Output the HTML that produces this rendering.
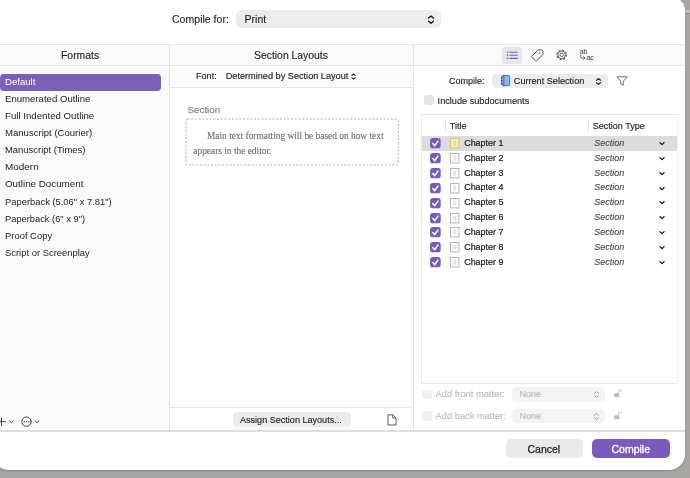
<!DOCTYPE html><html><head><meta charset="utf-8"><title>Compile</title><style>
*{box-sizing:border-box;margin:0;padding:0}
html,body{width:690px;height:478px;overflow:hidden}
body{position:relative;background:#a7a6a2;font-family:"Liberation Sans",sans-serif;color:#1d1d1d;font-size:9px;-webkit-text-stroke:.13px currentColor;-webkit-font-smoothing:antialiased}
.abs,.t,.l{position:absolute}
.t{white-space:nowrap;line-height:12px;height:12px}
.win{position:absolute;left:-5px;top:-2px;width:690px;height:472px;background:#fff;border-radius:12px 12px 16px 13px;box-shadow:0 1px 2.5px rgba(0,0,0,.16)}
.clip{position:absolute;left:-5px;top:-2px;width:690px;height:472px;border-radius:12px 12px 16px 13px;overflow:hidden}
.in{position:absolute;left:5px;top:2px;width:690px;height:478px;will-change:transform}
.hl{position:absolute;height:1px;background:#e4e4e4}
.vl{position:absolute;width:1px;background:#e4e4e4}
.cb{position:absolute;width:11px;height:11px;border-radius:3px;background:#7a58bf}
.cb svg{position:absolute;left:0;top:0}
.doc{position:absolute;width:9.5px;height:10.6px;border:1px solid #b4b4b4;background:#fff}
.doc i{position:absolute;left:2px;right:2px;top:2px;bottom:2px;background:#e9e9e9}
.sec{font-style:italic;color:#4a4a4a}
</style></head><body>
<div class="abs" style="left:670px;top:9.5px;width:20px;height:3.5px;background:#c3c0b8"></div><div class="abs" style="left:670px;top:13px;width:20px;height:1px;background:#8e8e8a"></div><div class="win"></div><div class="clip"><div class="in">
<div class="abs" style="left:0;top:45px;width:685px;height:21px;background:#fafafa"></div>
<div class="abs" style="left:0;top:66px;width:169px;height:365px;background:#fafafa"></div>
<div class="abs" style="left:170px;top:66px;width:243px;height:21px;background:#fbfbfb"></div>
<div class="hl" style="left:0;top:44px;width:685px"></div>
<div class="hl" style="left:0;top:65px;width:685px"></div>
<div class="vl" style="left:169px;top:45px;height:386px"></div>
<div class="vl" style="left:413px;top:45px;height:386px"></div>
<div class="hl" style="left:170px;top:87px;width:243px"></div>
<div class="hl" style="left:170px;top:407px;width:243px"></div>
<div class="abs" style="left:0;top:430px;width:685px;height:2px;background:#dcdce3"></div>
<div class="t" style="left:172px;top:13px;font-size:10.55px">Compile for:</div>
<div class="abs" style="left:235.6px;top:10.1px;width:205.6px;height:18px;border-radius:5px;background:#ececec"></div>
<div class="t" style="left:244.6px;top:13px;font-size:10.5px">Print</div>
<svg class="abs" style="left:426px;top:13px" width="10" height="13" viewBox="0 0 10 13"><path d="M2.5 5 L5 2.9 L7.5 5 M2.5 8.2 L5 10.3 L7.5 8.2" fill="none" stroke="#111" stroke-width="1.3" stroke-linecap="round" stroke-linejoin="round"/></svg>
<div class="t" style="left:61px;top:49.5px;font-size:10.4px">Formats</div>
<div class="t" style="left:254px;top:49.5px;font-size:10.4px">Section Layouts</div>
<div class="abs" style="left:-.5px;top:74px;width:161.5px;height:16.6px;border-radius:4px;background:#7b60ba"></div>
<div class="t" style="left:5px;top:76px;font-size:9.5px;color:#fff;-webkit-text-stroke:0;transform:scaleX(1.009);transform-origin:0 50%">Default</div>
<div class="t" style="left:5px;top:93px;font-size:9.5px;color:#222;-webkit-text-stroke:0;transform:scaleX(1.01);transform-origin:0 50%">Enumerated Outline</div>
<div class="t" style="left:5px;top:110px;font-size:9.5px;color:#222;-webkit-text-stroke:0;transform:scaleX(1.018);transform-origin:0 50%">Full Indented Outline</div>
<div class="t" style="left:5px;top:127px;font-size:9.5px;color:#222;-webkit-text-stroke:0;transform:scaleX(1.006);transform-origin:0 50%">Manuscript (Courier)</div>
<div class="t" style="left:5px;top:144px;font-size:9.5px;color:#222;-webkit-text-stroke:0;transform:scaleX(0.993);transform-origin:0 50%">Manuscript (Times)</div>
<div class="t" style="left:5px;top:161px;font-size:9.5px;color:#222;-webkit-text-stroke:0;transform:scaleX(1.046);transform-origin:0 50%">Modern</div>
<div class="t" style="left:5px;top:178px;font-size:9.5px;color:#222;-webkit-text-stroke:0;transform:scaleX(1.031);transform-origin:0 50%">Outline Document</div>
<div class="t" style="left:5px;top:196px;font-size:9.5px;color:#222;-webkit-text-stroke:0;transform:scaleX(0.987);transform-origin:0 50%">Paperback (5.06&quot; x 7.81&quot;)</div>
<div class="t" style="left:5px;top:213px;font-size:9.5px;color:#222;-webkit-text-stroke:0;transform:scaleX(0.98);transform-origin:0 50%">Paperback (6&quot; x 9&quot;)</div>
<div class="t" style="left:5px;top:230px;font-size:9.5px;color:#222;-webkit-text-stroke:0;transform:scaleX(0.991);transform-origin:0 50%">Proof Copy</div>
<div class="t" style="left:5px;top:247px;font-size:9.5px;color:#222;-webkit-text-stroke:0;transform:scaleX(0.991);transform-origin:0 50%">Script or Screenplay</div>
<svg class="abs" style="left:0;top:414px" width="44" height="16" viewBox="0 0 44 16"><g fill="none" stroke="#444" stroke-width="1" stroke-linecap="round" stroke-linejoin="round"><path d="M1.5 4 V11.6 M-2 7.7 H5.6"/><path d="M9.6 7 L11.4 8.7 L13.2 7"/><circle cx="26.5" cy="7.7" r="4.7"/><path d="M35.2 7 L37 8.7 L38.8 7"/></g><g fill="#444"><circle cx="24.3" cy="7.7" r=".7"/><circle cx="26.5" cy="7.7" r=".7"/><circle cx="28.7" cy="7.7" r=".7"/></g></svg>
<div class="t" style="left:196px;top:69.9px;font-size:9.1px">Font:</div>
<div class="t" style="left:225.7px;top:69.9px;font-size:9.17px">Determined by Section Layout</div>
<svg class="abs" style="left:350px;top:70.7px" width="7" height="11" viewBox="0 0 7 11"><path d="M1.9 4.4 L3.5 2.9 L5.1 4.4 M1.9 6.6 L3.5 8.1 L5.1 6.6" fill="none" stroke="#222" stroke-width="1.1" stroke-linecap="round" stroke-linejoin="round"/></svg>
<div class="t" style="left:187.5px;top:104px;font-size:9.8px;color:#7c7c7c">Section</div>
<svg class="abs" style="left:184px;top:117px" width="216" height="50" viewBox="0 0 216 50"><rect x="2" y="2" width="212.3" height="46" rx="1.5" fill="none" stroke="#adadad" stroke-width="1" stroke-dasharray="2 1.7"/></svg>
<div class="t" style="left:207px;top:129.5px;font-family:'Liberation Serif',serif;font-size:9.4px;color:#707070">Main text formatting will be based on how text</div>
<div class="t" style="left:193.3px;top:145px;font-family:'Liberation Serif',serif;font-size:9.4px;color:#707070">appears in the editor.</div>
<div class="abs" style="left:232.5px;top:411.5px;width:118px;height:15.5px;border-radius:4px;background:#ececec"></div>
<div class="t" style="left:240px;top:413.5px;font-size:9.07px">Assign Section Layouts...</div>
<svg class="abs" style="left:386px;top:413px" width="12" height="14" viewBox="0 0 12 14"><path d="M2 1.8 H6.8 L10 5 V12 H2 Z M6.8 1.8 V5 H10" fill="#fff" stroke="#4a4a4a" stroke-width=".9" stroke-linejoin="round"/></svg>
<div class="abs" style="left:502px;top:46.5px;width:20px;height:17px;border-radius:3px;background:#e6e6e6"></div>
<svg class="abs" style="left:504px;top:48px" width="16" height="14" viewBox="0 0 16 14"><g stroke="#7a58bf" stroke-width="1.1" stroke-linecap="round"><path d="M6 4.2 H13.2 M6 7.3 H13.2 M6 10.4 H13.2"/></g><g fill="#7a58bf"><circle cx="3.6" cy="4.2" r=".8"/><circle cx="3.6" cy="7.3" r=".8"/><circle cx="3.6" cy="10.4" r=".8"/></g></svg>
<svg class="abs" style="left:529px;top:47px" width="16" height="16" viewBox="0 0 16 16"><path d="M2.6 9.2 L8.6 3.6 Q9.4 2.9 10.5 2.9 L12.3 2.9 Q14 2.9 14 4.6 L14 6.6 Q14 7.6 13.3 8.3 L7.6 13.8 Q7 14.3 6.4 13.7 L2.6 10.2 Q2.1 9.7 2.6 9.2 Z" fill="none" stroke="#4d4d4d" stroke-width="1" stroke-linejoin="round"/><circle cx="10.8" cy="5.9" r=".75" fill="#4d4d4d"/></svg>
<svg class="abs" style="left:554px;top:47.1px" width="16" height="16" viewBox="0 0 16 16"><circle cx="7.7" cy="7.8" r="3.8" fill="none" stroke="#555" stroke-width=".95"/><circle cx="7.7" cy="7.8" r="4.8" fill="none" stroke="#555" stroke-width="1.1" stroke-dasharray="1.9 1.87"/><circle cx="7.7" cy="7.8" r="1.7" fill="none" stroke="#555" stroke-width=".85"/></svg>
<div class="t" style="left:579.8px;top:45.9px;font-size:6.8px;color:#555;letter-spacing:0">ab</div>
<div class="t" style="left:586.6px;top:51.9px;font-size:6.8px;color:#555;letter-spacing:0">ac</div>
<svg class="abs" style="left:578px;top:53px" width="10" height="8" viewBox="0 0 10 8"><path d="M2.7 2.4 V4 Q2.7 5 3.7 5 H7 M5.6 3.7 L7 5 L5.6 6.3" fill="none" stroke="#555" stroke-width=".9" stroke-linecap="round" stroke-linejoin="round"/></svg>
<div class="t" style="left:449px;top:74.8px;font-size:9px">Compile:</div>
<div class="abs" style="left:492px;top:73.5px;width:115.5px;height:14.5px;border-radius:4.5px;background:#ececec"></div>
<svg class="abs" style="left:500px;top:74px" width="11" height="13" viewBox="0 0 11 13"><rect x="1.8" y="1.6" width="7.8" height="10" rx="1.2" fill="#86bdf0" stroke="#3a6a9f" stroke-width=".9"/><path d="M3.9 1.6 V11.6" stroke="#2c5f93" stroke-width=".9"/><path d="M.9 3.6 H2.6 M.9 6.6 H2.6 M.9 9.6 H2.6" stroke="#333" stroke-width=".8"/></svg>
<div class="t" style="left:513.8px;top:74.8px;font-size:9.14px">Current Selection</div>
<svg class="abs" style="left:595.2px;top:75.6px" width="7" height="11" viewBox="0 0 7 11"><path d="M1.5 4.2 L3.5 2.6 L5.5 4.2 M1.5 6.8 L3.5 8.4 L5.5 6.8" fill="none" stroke="#111" stroke-width="1.15" stroke-linecap="round" stroke-linejoin="round"/></svg>
<svg class="abs" style="left:615px;top:75px" width="14" height="12" viewBox="0 0 14 12"><path d="M1.8 1.8 H12.2 L8.3 6.2 V10.2 L5.7 8.8 V6.2 Z" fill="none" stroke="#686868" stroke-width=".95" stroke-linejoin="round"/></svg>
<div class="abs" style="left:424.3px;top:95.2px;width:10px;height:9.7px;border-radius:2.7px;background:#e5e5e5"></div>
<div class="t" style="left:437.6px;top:95px;font-size:9.17px">Include subdocuments</div>
<div class="abs" style="left:421px;top:114px;width:257px;height:270px;border:1px solid #e6e6e6;border-left-color:#eaeaea;border-right-color:#efefef;background:#fff"></div>
<div class="vl" style="left:445px;top:119.5px;height:12.5px;background:#e2e2e2"></div>
<div class="vl" style="left:588px;top:119.5px;height:12.5px;background:#e2e2e2"></div>
<div class="t" style="left:449.8px;top:120px;font-size:9.1px">Title</div>
<div class="t" style="left:592.7px;top:120px;font-size:9.06px">Section Type</div>
<div class="abs" style="left:422px;top:136.1px;width:255px;height:14.6px;background:#dcdcdc"></div>
<svg class="abs" style="left:430px;top:138.3px" width="11" height="11" viewBox="0 0 11 11"><rect x=".1" y=".05" width="10.6" height="10.3" rx="2.7" fill="#7a58bf"/><path d="M2.8 5.5 L4.6 7.7 L8 3.1" fill="none" stroke="#fff" stroke-width="1.5" stroke-linecap="round" stroke-linejoin="round"/></svg>
<svg class="abs" style="left:450px;top:138.3px" width="10" height="11" viewBox="0 0 10 11"><rect x=".5" y=".5" width="8.4" height="9.4" fill="#f8f0b2" stroke="#d6c670" stroke-width="1"/><rect x="3.2" y="2.7" width="3.2" height="5" fill="#ecdc8c"/></svg>
<div class="t" style="left:464.2px;top:137px;font-size:8.95px;-webkit-text-stroke:.22px currentColor">Chapter 1</div>
<div class="t sec" style="left:594.2px;top:137px;font-size:9px">Section</div>
<svg class="abs" style="left:658.3px;top:140.0px" width="8" height="7" viewBox="0 0 8 7"><path d="M1.9 2.6 L4 4.6 L6.1 2.6" fill="none" stroke="#111" stroke-width="1.3" stroke-linecap="round" stroke-linejoin="round"/></svg>
<svg class="abs" style="left:430px;top:153.1px" width="11" height="11" viewBox="0 0 11 11"><rect x=".1" y=".05" width="10.6" height="10.3" rx="2.7" fill="#7a58bf"/><path d="M2.8 5.5 L4.6 7.7 L8 3.1" fill="none" stroke="#fff" stroke-width="1.5" stroke-linecap="round" stroke-linejoin="round"/></svg>
<svg class="abs" style="left:450px;top:153.1px" width="10" height="11" viewBox="0 0 10 11"><rect x=".5" y=".5" width="8.4" height="9.4" fill="#fff" stroke="#b4b4b4" stroke-width="1"/><rect x="3.2" y="2.7" width="3.2" height="5" fill="#e4e4e4"/></svg>
<div class="t" style="left:464.2px;top:152px;font-size:8.95px;-webkit-text-stroke:.22px currentColor">Chapter 2</div>
<div class="t sec" style="left:594.2px;top:152px;font-size:9px">Section</div>
<svg class="abs" style="left:658.3px;top:154.8px" width="8" height="7" viewBox="0 0 8 7"><path d="M1.9 2.6 L4 4.6 L6.1 2.6" fill="none" stroke="#111" stroke-width="1.3" stroke-linecap="round" stroke-linejoin="round"/></svg>
<svg class="abs" style="left:430px;top:168.0px" width="11" height="11" viewBox="0 0 11 11"><rect x=".1" y=".05" width="10.6" height="10.3" rx="2.7" fill="#7a58bf"/><path d="M2.8 5.5 L4.6 7.7 L8 3.1" fill="none" stroke="#fff" stroke-width="1.5" stroke-linecap="round" stroke-linejoin="round"/></svg>
<svg class="abs" style="left:450px;top:168.0px" width="10" height="11" viewBox="0 0 10 11"><rect x=".5" y=".5" width="8.4" height="9.4" fill="#fff" stroke="#b4b4b4" stroke-width="1"/><rect x="3.2" y="2.7" width="3.2" height="5" fill="#e4e4e4"/></svg>
<div class="t" style="left:464.2px;top:167px;font-size:8.95px;-webkit-text-stroke:.22px currentColor">Chapter 3</div>
<div class="t sec" style="left:594.2px;top:167px;font-size:9px">Section</div>
<svg class="abs" style="left:658.3px;top:169.7px" width="8" height="7" viewBox="0 0 8 7"><path d="M1.9 2.6 L4 4.6 L6.1 2.6" fill="none" stroke="#111" stroke-width="1.3" stroke-linecap="round" stroke-linejoin="round"/></svg>
<svg class="abs" style="left:430px;top:182.8px" width="11" height="11" viewBox="0 0 11 11"><rect x=".1" y=".05" width="10.6" height="10.3" rx="2.7" fill="#7a58bf"/><path d="M2.8 5.5 L4.6 7.7 L8 3.1" fill="none" stroke="#fff" stroke-width="1.5" stroke-linecap="round" stroke-linejoin="round"/></svg>
<svg class="abs" style="left:450px;top:182.8px" width="10" height="11" viewBox="0 0 10 11"><rect x=".5" y=".5" width="8.4" height="9.4" fill="#fff" stroke="#b4b4b4" stroke-width="1"/><rect x="3.2" y="2.7" width="3.2" height="5" fill="#e4e4e4"/></svg>
<div class="t" style="left:464.2px;top:181px;font-size:8.95px;-webkit-text-stroke:.22px currentColor">Chapter 4</div>
<div class="t sec" style="left:594.2px;top:181px;font-size:9px">Section</div>
<svg class="abs" style="left:658.3px;top:184.5px" width="8" height="7" viewBox="0 0 8 7"><path d="M1.9 2.6 L4 4.6 L6.1 2.6" fill="none" stroke="#111" stroke-width="1.3" stroke-linecap="round" stroke-linejoin="round"/></svg>
<svg class="abs" style="left:430px;top:197.7px" width="11" height="11" viewBox="0 0 11 11"><rect x=".1" y=".05" width="10.6" height="10.3" rx="2.7" fill="#7a58bf"/><path d="M2.8 5.5 L4.6 7.7 L8 3.1" fill="none" stroke="#fff" stroke-width="1.5" stroke-linecap="round" stroke-linejoin="round"/></svg>
<svg class="abs" style="left:450px;top:197.7px" width="10" height="11" viewBox="0 0 10 11"><rect x=".5" y=".5" width="8.4" height="9.4" fill="#fff" stroke="#b4b4b4" stroke-width="1"/><rect x="3.2" y="2.7" width="3.2" height="5" fill="#e4e4e4"/></svg>
<div class="t" style="left:464.2px;top:196px;font-size:8.95px;-webkit-text-stroke:.22px currentColor">Chapter 5</div>
<div class="t sec" style="left:594.2px;top:196px;font-size:9px">Section</div>
<svg class="abs" style="left:658.3px;top:199.4px" width="8" height="7" viewBox="0 0 8 7"><path d="M1.9 2.6 L4 4.6 L6.1 2.6" fill="none" stroke="#111" stroke-width="1.3" stroke-linecap="round" stroke-linejoin="round"/></svg>
<svg class="abs" style="left:430px;top:212.5px" width="11" height="11" viewBox="0 0 11 11"><rect x=".1" y=".05" width="10.6" height="10.3" rx="2.7" fill="#7a58bf"/><path d="M2.8 5.5 L4.6 7.7 L8 3.1" fill="none" stroke="#fff" stroke-width="1.5" stroke-linecap="round" stroke-linejoin="round"/></svg>
<svg class="abs" style="left:450px;top:212.5px" width="10" height="11" viewBox="0 0 10 11"><rect x=".5" y=".5" width="8.4" height="9.4" fill="#fff" stroke="#b4b4b4" stroke-width="1"/><rect x="3.2" y="2.7" width="3.2" height="5" fill="#e4e4e4"/></svg>
<div class="t" style="left:464.2px;top:211px;font-size:8.95px;-webkit-text-stroke:.22px currentColor">Chapter 6</div>
<div class="t sec" style="left:594.2px;top:211px;font-size:9px">Section</div>
<svg class="abs" style="left:658.3px;top:214.2px" width="8" height="7" viewBox="0 0 8 7"><path d="M1.9 2.6 L4 4.6 L6.1 2.6" fill="none" stroke="#111" stroke-width="1.3" stroke-linecap="round" stroke-linejoin="round"/></svg>
<svg class="abs" style="left:430px;top:227.3px" width="11" height="11" viewBox="0 0 11 11"><rect x=".1" y=".05" width="10.6" height="10.3" rx="2.7" fill="#7a58bf"/><path d="M2.8 5.5 L4.6 7.7 L8 3.1" fill="none" stroke="#fff" stroke-width="1.5" stroke-linecap="round" stroke-linejoin="round"/></svg>
<svg class="abs" style="left:450px;top:227.3px" width="10" height="11" viewBox="0 0 10 11"><rect x=".5" y=".5" width="8.4" height="9.4" fill="#fff" stroke="#b4b4b4" stroke-width="1"/><rect x="3.2" y="2.7" width="3.2" height="5" fill="#e4e4e4"/></svg>
<div class="t" style="left:464.2px;top:226px;font-size:8.95px;-webkit-text-stroke:.22px currentColor">Chapter 7</div>
<div class="t sec" style="left:594.2px;top:226px;font-size:9px">Section</div>
<svg class="abs" style="left:658.3px;top:229.0px" width="8" height="7" viewBox="0 0 8 7"><path d="M1.9 2.6 L4 4.6 L6.1 2.6" fill="none" stroke="#111" stroke-width="1.3" stroke-linecap="round" stroke-linejoin="round"/></svg>
<svg class="abs" style="left:430px;top:242.2px" width="11" height="11" viewBox="0 0 11 11"><rect x=".1" y=".05" width="10.6" height="10.3" rx="2.7" fill="#7a58bf"/><path d="M2.8 5.5 L4.6 7.7 L8 3.1" fill="none" stroke="#fff" stroke-width="1.5" stroke-linecap="round" stroke-linejoin="round"/></svg>
<svg class="abs" style="left:450px;top:242.2px" width="10" height="11" viewBox="0 0 10 11"><rect x=".5" y=".5" width="8.4" height="9.4" fill="#fff" stroke="#b4b4b4" stroke-width="1"/><rect x="3.2" y="2.7" width="3.2" height="5" fill="#e4e4e4"/></svg>
<div class="t" style="left:464.2px;top:241px;font-size:8.95px;-webkit-text-stroke:.22px currentColor">Chapter 8</div>
<div class="t sec" style="left:594.2px;top:241px;font-size:9px">Section</div>
<svg class="abs" style="left:658.3px;top:243.9px" width="8" height="7" viewBox="0 0 8 7"><path d="M1.9 2.6 L4 4.6 L6.1 2.6" fill="none" stroke="#111" stroke-width="1.3" stroke-linecap="round" stroke-linejoin="round"/></svg>
<svg class="abs" style="left:430px;top:257.0px" width="11" height="11" viewBox="0 0 11 11"><rect x=".1" y=".05" width="10.6" height="10.3" rx="2.7" fill="#7a58bf"/><path d="M2.8 5.5 L4.6 7.7 L8 3.1" fill="none" stroke="#fff" stroke-width="1.5" stroke-linecap="round" stroke-linejoin="round"/></svg>
<svg class="abs" style="left:450px;top:257.0px" width="10" height="11" viewBox="0 0 10 11"><rect x=".5" y=".5" width="8.4" height="9.4" fill="#fff" stroke="#b4b4b4" stroke-width="1"/><rect x="3.2" y="2.7" width="3.2" height="5" fill="#e4e4e4"/></svg>
<div class="t" style="left:464.2px;top:256px;font-size:8.95px;-webkit-text-stroke:.22px currentColor">Chapter 9</div>
<div class="t sec" style="left:594.2px;top:256px;font-size:9px">Section</div>
<svg class="abs" style="left:658.3px;top:258.7px" width="8" height="7" viewBox="0 0 8 7"><path d="M1.9 2.6 L4 4.6 L6.1 2.6" fill="none" stroke="#111" stroke-width="1.3" stroke-linecap="round" stroke-linejoin="round"/></svg>
<div class="abs" style="left:422.3px;top:389.7px;width:10px;height:9.8px;border-radius:2.7px;background:#f0f0f0"></div>
<div class="t" style="left:435.6px;top:388.4px;font-size:9.3px;color:#bababa">Add front matter:</div>
<div class="abs" style="left:512px;top:387.0px;width:93px;height:14.8px;border-radius:4.5px;background:#f3f3f3"></div>
<div class="t" style="left:519.6px;top:388.4px;font-size:9px;color:#b7b7b7">None</div>
<svg class="abs" style="left:592.5px;top:388.9px" width="7" height="11" viewBox="0 0 7 11"><path d="M1.5 4.2 L3.5 2.6 L5.5 4.2 M1.5 6.8 L3.5 8.4 L5.5 6.8" fill="none" stroke="#9a9a9a" stroke-width="1" stroke-linecap="round" stroke-linejoin="round"/></svg>
<svg class="abs" style="left:612.5px;top:388.4px" width="10" height="11" viewBox="0 0 10 11"><rect x="1.2" y="5.2" width="5.2" height="3.8" rx=".6" fill="#b9b9b9"/><path d="M5.2 5.2 V3.6 A1.6 1.6 0 0 1 8.4 3.6 V4.4" fill="none" stroke="#b9b9b9" stroke-width=".9"/></svg>
<div class="abs" style="left:422.3px;top:411.3px;width:10px;height:9.8px;border-radius:2.7px;background:#f0f0f0"></div>
<div class="t" style="left:435.6px;top:410.0px;font-size:9.3px;color:#bababa">Add back matter:</div>
<div class="abs" style="left:512px;top:408.6px;width:93px;height:14.8px;border-radius:4.5px;background:#f3f3f3"></div>
<div class="t" style="left:519.6px;top:410.0px;font-size:9px;color:#b7b7b7">None</div>
<svg class="abs" style="left:592.5px;top:410.5px" width="7" height="11" viewBox="0 0 7 11"><path d="M1.5 4.2 L3.5 2.6 L5.5 4.2 M1.5 6.8 L3.5 8.4 L5.5 6.8" fill="none" stroke="#9a9a9a" stroke-width="1" stroke-linecap="round" stroke-linejoin="round"/></svg>
<svg class="abs" style="left:612.5px;top:410.0px" width="10" height="11" viewBox="0 0 10 11"><rect x="1.2" y="5.2" width="5.2" height="3.8" rx=".6" fill="#b9b9b9"/><path d="M5.2 5.2 V3.6 A1.6 1.6 0 0 1 8.4 3.6 V4.4" fill="none" stroke="#b9b9b9" stroke-width=".9"/></svg>
<div class="abs" style="left:505.5px;top:439px;width:77px;height:18.5px;border-radius:5px;background:#e9e9e9"></div>
<div class="t" style="left:527.5px;top:442.5px;font-size:10.5px;-webkit-text-stroke:.25px currentColor">Cancel</div>
<div class="abs" style="left:592.3px;top:439px;width:77.5px;height:18.5px;border-radius:5px;background:#7a5bbd"></div>
<div class="t" style="left:611.5px;top:442.5px;font-size:10.5px;color:#fff;-webkit-text-stroke:.3px currentColor">Compile</div>
</div></div></body></html>
